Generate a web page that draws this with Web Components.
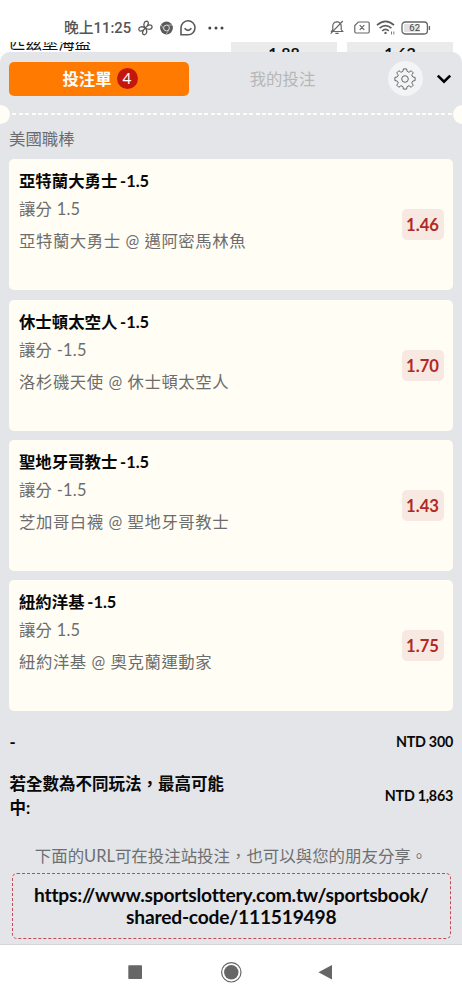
<!DOCTYPE html>
<html lang="zh-Hant">
<head>
<meta charset="utf-8">
<title>投注單</title>
<style>
html,body{margin:0;height:100%;background:#fff}
body{font-family:Lato,"Noto Sans CJK TC",sans-serif;color:#111;overflow:hidden;font-variant-ligatures:none}
</style>
</head>
<body>
<bet-app></bet-app>
<script>
const define = (name, html) => customElements.define(name, class extends HTMLElement {
  constructor() {
    super();
    const t = document.createElement('template');
    t.innerHTML = html;
    this.attachShadow({ mode: 'open' }).append(t.content.cloneNode(true));
  }
});

define('status-bar', `
<style>
:host{display:flex;box-sizing:border-box;height:42px;padding:13px 31px 0 64px;align-items:center;background:#fff;color:#555}
.time{font:500 14.8px/28px Roboto,"Noto Sans CJK TC",sans-serif;white-space:nowrap;width:67px}
svg{display:block;flex:none}
.gap{flex:1}
</style>
<span class="time">晚上11:25</span>
<svg style="margin-left:7px" width="15" height="16" viewBox="0 0 15 16" fill="none" stroke="#5a5a5a" stroke-width="1.3" stroke-linejoin="round"><path d="M7.3 8C5.2 5.8 5.4 1.8 8.4 1.2C11.6 1.4 10.6 5.4 7.3 8zM7.3 8C9 5 13 3.6 14.1 6.4C14.2 9.8 10.6 10 7.3 8zM7.3 8C9.6 10.4 9 14.4 6.4 14.8C3.4 14.4 4.2 10.8 7.3 8zM7.3 8C5.4 11.2 1.6 12.2 .8 9.6C.6 6.4 4.2 6 7.3 8z"/></svg>
<svg style="margin-left:7px" width="13" height="14" viewBox="0 0 13 14"><circle cx="6.5" cy="7" r="6.4" fill="#5a5a5a"/><circle cx="6.5" cy="7" r="2.9" fill="#5a5a5a" stroke="#ddd" stroke-width="1"/><path d="M6.5 4.1H12M4 8.5L1.2 4M9 8.5L6.4 13" stroke="#ccc" stroke-width=".7"/></svg>
<svg style="margin-left:7px" width="16" height="16" viewBox="0 0 16 16" fill="none" stroke="#5a5a5a" stroke-width="1.6"><path d="M1 14.8V8A7 7 0 1 1 8 14.8z"/><path d="M4.6 8.3Q8 12.5 11.4 8.3"/></svg>
<svg style="margin-left:12px" width="16" height="4" viewBox="0 0 16 4" fill="#444"><circle cx="1.8" cy="2" r="1.5"/><circle cx="8" cy="2" r="1.5"/><circle cx="14" cy="2" r="1.5"/></svg>
<span class="gap"></span>
<svg width="14" height="15" viewBox="0 0 14 15" fill="none" stroke="#666" stroke-width="1.2"><path d="M1.5 11.5H12.7L11.2 9.5V6A4.2 4.2 0 0 0 2.8 6V9.5zM5.3 13.4H8.7M7 1V2M.7 13.7L12.8 1"/></svg>
<svg style="margin-left:10px" width="16" height="13" viewBox="0 0 16 13" fill="none" stroke="#666" stroke-width="1.2"><path d="M4.3 1H14Q15.2 1 15.2 2.2V10.8Q15.2 12 14 12H2Q.8 12 .8 10.8V4.5zM5.7 4.2L10.3 8.8M10.3 4.2L5.7 8.8"/></svg>
<svg style="margin-left:6px" width="20" height="15" viewBox="0 0 20 15" fill="none" stroke="#5d5d5d" stroke-width="1.7"><path d="M1 5.2Q9.5-2.4 18 5.2M3.6 8.2Q9.5 3 15.4 8.2M6.2 10.8Q9.5 8 12.8 10.8"/><circle cx="9.5" cy="12.9" r="1.2" fill="#5d5d5d" stroke="none"/><path d="M15.5 11.5v3M17.8 11.5v3" stroke-width=".8"/></svg>
<svg style="margin-left:5px" width="30" height="14" viewBox="0 0 30 14"><rect x="3" y="3" width="16" height="8" fill="#e2e2e2"/><rect x="1" y="1" width="25.4" height="12" rx="3.2" fill="none" stroke="#666" stroke-width="1.3"/><path d="M28.4 5v4" stroke="#666" stroke-width="1.4"/><text x="13.7" y="10.3" text-anchor="middle" font-family="Roboto,sans-serif" font-size="9.5" fill="#444">62</text></svg>
`);

define('odds-peek', `
<style>
:host{display:flex;height:24px;overflow:hidden;background:#fff;margin-bottom:-14px}
.team{box-sizing:border-box;width:231px;padding-left:9px;font-size:16.4px;line-height:24px;margin-top:-11px;color:#111}
.cell{box-sizing:border-box;width:106px;margin-right:10px;background:#ebebec;text-align:center;font-weight:700;font-size:16px;line-height:22px;height:24px;color:#111}
.cell+.cell{margin-right:0}
</style>
<span class="team">匹茲堡海盜</span><span class="cell">1.88</span><span class="cell">1.62</span>
`);

define('slip-tabs', `
<style>
:host{display:flex;height:34px;padding:9.5px 9px 0 9px;align-items:center}
.tab{width:180px;height:34px;border-radius:5px;display:flex;align-items:center;justify-content:center;font-size:16.4px;line-height:24px}
.on{background:#ff7a00;color:#fff;font-weight:700;gap:5px}
.off{width:187px;color:#b6b7b9}
.count{width:21px;height:21px;border-radius:50%;background:#c4170c;font-weight:400;font-size:15.5px;line-height:21px;text-align:center;margin-right:-2px}
.gear{width:35px;height:35px;border-radius:50%;background:#f3f4f6;display:grid;place-items:center;margin-left:11.5px}
.chev{margin-left:13.5px}
svg{display:block}
</style>
<span class="tab on"><span>投注單</span><span class="count">4</span></span>
<span class="tab off">我的投注</span>
<span class="gear"><svg width="22" height="22" viewBox="-11 -11 22 22" fill="none" stroke="#666" stroke-width="1" stroke-linejoin="round"><path d="M-1.6-10.1H1.6Q1.7-7.4 3-6.9Q4.5-6.6 6.1-8.3L8.3-6.1Q6.6-4.5 6.9-3Q7.4-1.7 10.1-1.6V1.6Q7.4 1.7 6.9 3Q6.6 4.5 8.3 6.1L6.1 8.3Q4.5 6.6 3 6.9Q1.7 7.4 1.6 10.1H-1.6Q-1.7 7.4-3 6.9Q-4.5 6.6-6.1 8.3L-8.3 6.1Q-6.6 4.5-6.9 3Q-7.4 1.7-10.1 1.6V-1.6Q-7.4-1.7-6.9-3Q-6.6-4.5-8.3-6.1L-6.1-8.3Q-4.5-6.6-3-6.9Q-1.7-7.4-1.6-10.1z"/><circle r="3.3"/></svg></span>
<svg class="chev" width="16" height="10" viewBox="0 0 16 10" fill="none" stroke="#000" stroke-width="2.6"><path d="M1.8 1.6L8 7.6L14.2 1.6"/></svg>
`);

define('ticket-tear', `
<style>
:host{display:flex;align-items:center;justify-content:space-between;height:19px;margin-top:9px;overflow:hidden}
i{width:19px;height:19px;border-radius:50%;background:#fffdf5;flex:none}
i:first-of-type{margin-left:-9.5px}i:last-of-type{margin-right:-9.5px}
b{flex:1;height:2px;background:repeating-linear-gradient(90deg,transparent 0 2.4px,#fffdf5 2.4px 6.4px)}
</style><i></i><b></b><i></i>
`);

define('bet-card', `
<style>
:host{display:flex;box-sizing:border-box;height:131px;margin:0 9px 9.45px 9.4px;padding:10px 9.5px 0 9.6px;border-radius:5px;background:#fffdf4;justify-content:space-between;line-height:24px;font-size:16.4px;color:#6d6d6d}
.title{font-weight:700;color:#080808;word-spacing:-1.2px}
.line{margin-top:4px;letter-spacing:.25px}
.match{margin-top:8px;letter-spacing:.56px}
.odds{width:42px;height:31px;line-height:32px;margin-top:40px;border-radius:5px;background:#f7e8e1;color:#b02a25;font-weight:700;text-align:center;font-size:16.6px}
</style>
<div><div class="title"><slot name="title"></slot></div><div class="line"><slot name="line"></slot></div><div class="match"><slot></slot></div></div>
<div class="odds"><slot name="odds"></slot></div>
`);

define('sum-row', `
<style>
:host{display:flex;justify-content:space-between;align-items:center;padding:0 9px 0 9.5px;font-weight:700;color:#080808;font-size:16.5px;line-height:24px}
.label{width:222px}
.amount{font-size:14.3px;letter-spacing:-.25px}
</style>
<span class="label"><slot></slot></span><span class="amount"><slot name="amount"></slot></span>
`);

define('share-code', `
<style>
:host{display:block;text-align:center}
p{margin:0;font-size:16.45px;line-height:24px;color:#6d6f71;white-space:nowrap}
.box{box-sizing:border-box;margin:5px 11.5px 0 12px;height:66px;padding-top:10px;border:1px dashed #c2485a;border-radius:5px;font-weight:700;font-size:19.2px;letter-spacing:-.2px;line-height:22px;color:#080808}
</style>
<p><slot></slot></p><div class="box"><slot name="url"></slot></div>
`);

define('nav-bar', `
<style>
:host{display:block;height:55px;background:#fff;border-top:1px solid #d5d6d7}
svg{display:block}
</style>
<svg width="462" height="55" viewBox="0 945 462 55" fill="#666"><rect x="128.3" y="965.3" width="13.7" height="13.7" rx=".8"/><circle cx="231.3" cy="972.3" r="7.2"/><circle cx="231.3" cy="972.3" r="9.7" fill="none" stroke="#666" stroke-width="1.2"/><path d="M318.4 972.3L332 965V979.6z"/></svg>
`);

define('bet-app', `
<style>
:host{display:flex;flex-direction:column;width:462px;height:1000px;overflow:hidden}
.sheet{position:relative;flex:1;background:#e4e5e8;border-radius:10px 10px 0 0;overflow:hidden}
h2{margin:3px 0 8.6px 9px;font-size:16.4px;line-height:24px;font-weight:400;color:#6a6b6d}
.r1{margin-top:19px}.r2{margin-top:18px}
share-code{margin-top:24px}
</style>
<status-bar></status-bar>
<odds-peek></odds-peek>
<div class="sheet">
<slip-tabs></slip-tabs>
<ticket-tear></ticket-tear>
<h2>美國職棒</h2>
<bet-card><span slot="title">亞特蘭大勇士 -1.5</span><span slot="line">讓分 1.5</span>亞特蘭大勇士 @ 邁阿密馬林魚<span slot="odds">1.46</span></bet-card>
<bet-card><span slot="title">休士頓太空人 -1.5</span><span slot="line">讓分 -1.5</span>洛杉磯天使 @ 休士頓太空人<span slot="odds">1.70</span></bet-card>
<bet-card><span slot="title">聖地牙哥教士 -1.5</span><span slot="line">讓分 -1.5</span>芝加哥白襪 @ 聖地牙哥教士<span slot="odds">1.43</span></bet-card>
<bet-card><span slot="title">紐約洋基 -1.5</span><span slot="line">讓分 1.5</span>紐約洋基 @ 奧克蘭運動家<span slot="odds">1.75</span></bet-card>
<sum-row class="r1">-<span slot="amount">NTD 300</span></sum-row>
<sum-row class="r2">若全數為不同玩法，最高可能中:<span slot="amount">NTD 1,863</span></sum-row>
<share-code>下面的URL可在投注站投注，也可以與您的朋友分享。<span slot="url">https://www.sportslottery.com.tw/sportsbook/<br>shared-code/111519498</span></share-code>
</div>
<nav-bar></nav-bar>
`);
</script>
</body>
</html>
